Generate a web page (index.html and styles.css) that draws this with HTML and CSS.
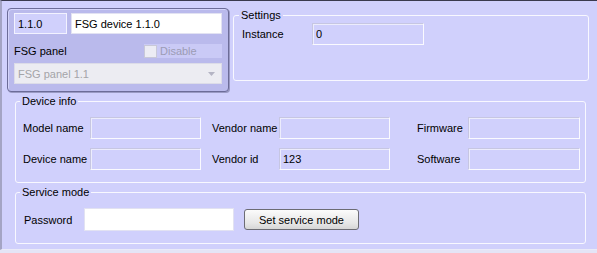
FILE: index.html
```html
<!DOCTYPE html>
<html lang="en">

<head>
    <meta charset="UTF-8">
    <meta name="viewport" content="width=device-width, initial-scale=1.0">
    <title>FSG device 1.1.0</title>
    <link rel="stylesheet" href="styles.css">
</head>

<body>
    <div class="window">

        <!-- Top: device card and settings -->
        <div class="top-row">
            <div class="device-card">
                <div class="card-row">
                    <input class="field field-ro field-id" type="text" value="1.1.0" readonly>
                    <input class="field field-white field-name" type="text" value="FSG device 1.1.0">
                </div>
                <div class="card-row panel-row">
                    <span class="label">FSG panel</span>
                    <label class="disable-box">
                        <input class="check" type="checkbox" disabled>
                        <span>Disable</span>
                    </label>
                </div>
                <div class="combo">
                    <span>FSG panel 1.1</span>
                    <svg class="combo-arrow" width="7" height="4" viewBox="0 0 7 4">
                        <path d="M0 0 H7 L3.5 4 Z" fill="#b4b4c4"/>
                    </svg>
                </div>
            </div>

            <fieldset class="group settings">
                <legend>Settings</legend>
                <div class="form-row">
                    <span class="label instance-label">Instance</span>
                    <input class="field field-ro instance-field" type="text" value="0" readonly>
                </div>
            </fieldset>
        </div>

        <!-- Device info -->
        <fieldset class="group device-info">
            <legend>Device info</legend>
            <div class="info-grid">
                <span class="label">Model name</span>
                <input class="field field-ro" type="text" readonly>
                <span class="label lbl-mid">Vendor name</span>
                <input class="field field-ro" type="text" readonly>
                <span class="label lbl-right">Firmware</span>
                <input class="field field-ro" type="text" readonly>

                <span class="label">Device name</span>
                <input class="field field-ro" type="text" readonly>
                <span class="label lbl-mid">Vendor id</span>
                <input class="field field-ro" type="text" value="123" readonly>
                <span class="label lbl-right">Software</span>
                <input class="field field-ro" type="text" readonly>
            </div>
        </fieldset>

        <!-- Service mode -->
        <fieldset class="group service-mode">
            <legend>Service mode</legend>
            <div class="form-row service-row">
                <span class="label password-label">Password</span>
                <input class="field field-white password-field" type="password">
                <button class="btn" type="button">Set service mode</button>
            </div>
        </fieldset>

    </div>
</body>

</html>
```

FILE: styles.css
```css
body {
    margin: 0;
    background-color: #e4e4f6;
    font-family: "Liberation Sans", Arial, sans-serif;
    font-size: 11px;
    color: #000;
}

.window {
    box-sizing: border-box;
    width: 597px;
    height: 250px;
    background-color: #d0d0fc;
    border-top: 1px solid #3a3a4e;
    border-left: 2px solid #a4a4c4;
    border-bottom: 1px solid #eaeaf8;
}

.label {
    white-space: nowrap;
}

/* Inputs */
.field {
    box-sizing: border-box;
    height: 22px;
    margin: 0;
    padding: 0 3px;
    font-family: inherit;
    font-size: 11px;
    color: #000;
    outline: none;
}

.field-ro {
    background-color: #d0d0fc;
    border: 1px solid;
    border-color: #c6c6e2 #fafaff #fafaff #c6c6e2;
    box-shadow: inset 1px 1px 0 #ececfc;
}

.field-white {
    background-color: #fff;
    border: 1px solid #e2e2f2;
}

/* Top row */
.top-row {
    display: flex;
    align-items: flex-start;
    padding: 7px 0 0 5px;
}

.device-card {
    box-sizing: border-box;
    width: 222px;
    height: 84px;
    padding: 4px 6px 0 6px;
    background-color: #babaec;
    border: 1px solid #6c6c98;
    border-radius: 4px;
    box-shadow: inset 1px 1px 0 #d4d4fa, 1px 1px 0 #9a9ac4;
}

.card-row {
    display: flex;
    align-items: center;
    gap: 4px;
}

.field-id {
    width: 53px;
    height: 21px;
    border-color: #f2f2ff;
    box-shadow: none;
}

.field-name {
    width: 151px;
    height: 21px;
}

.panel-row {
    justify-content: space-between;
    margin-top: 10px;
    height: 14px;
}

.disable-box {
    display: flex;
    align-items: center;
    gap: 3px;
    width: 78px;
    height: 14px;
    background-color: #cacaf6;
    color: #9c9cb4;
}

.check {
    appearance: none;
    box-sizing: border-box;
    width: 13px;
    height: 13px;
    margin: 0;
    background-color: #ececf4;
    border: 1px solid #c8c8d8;
}

.combo {
    box-sizing: border-box;
    display: flex;
    align-items: center;
    justify-content: space-between;
    height: 21px;
    margin-top: 5px;
    padding: 0 6px 0 3px;
    background-color: #ececf2;
    border: 1px solid #dcdce8;
    color: #a4a4a8;
}

/* Group boxes */
.group {
    box-sizing: border-box;
    min-width: 0;
    margin: 0;
    padding: 0 7px;
    border: 1px solid #f8f8ff;
    border-radius: 3px;
}

.group legend {
    padding: 0 2px;
    margin-left: -3px;
    line-height: 12px;
}

.settings {
    width: 356px;
    height: 72px;
    margin: 1px 0 0 4px;
    padding: 0 8px;
}

.form-row {
    display: flex;
    align-items: center;
}

.settings .form-row {
    margin-top: 2px;
}

.instance-label {
    width: 70px;
}

.instance-field {
    width: 112px;
}

.device-info {
    width: 571px;
    height: 88px;
    margin: 3px 0 0 13px;
}

.info-grid {
    display: grid;
    grid-template-columns: 67px 111px 78px 111px 78px 112px;
    row-gap: 9px;
    align-items: center;
    margin-top: 10px;
}

.lbl-mid {
    padding-left: 11px;
}

.lbl-right {
    padding-left: 27px;
}

.service-mode {
    width: 571px;
    height: 58px;
    margin: 3px 0 0 13px;
}

.service-row {
    margin-top: 10px;
}

.password-label {
    width: 60px;
    padding-left: 1px;
}

.password-field {
    width: 150px;
    height: 23px;
}

.btn {
    box-sizing: border-box;
    width: 115px;
    height: 21px;
    margin-left: 10px;
    padding: 0;
    font-family: inherit;
    font-size: 11px;
    color: #000;
    background: linear-gradient(#fbfbfb, #e6e6e6 70%, #d6d6d6);
    border: 1px solid #6c6c74;
    border-radius: 3px;
}
```
